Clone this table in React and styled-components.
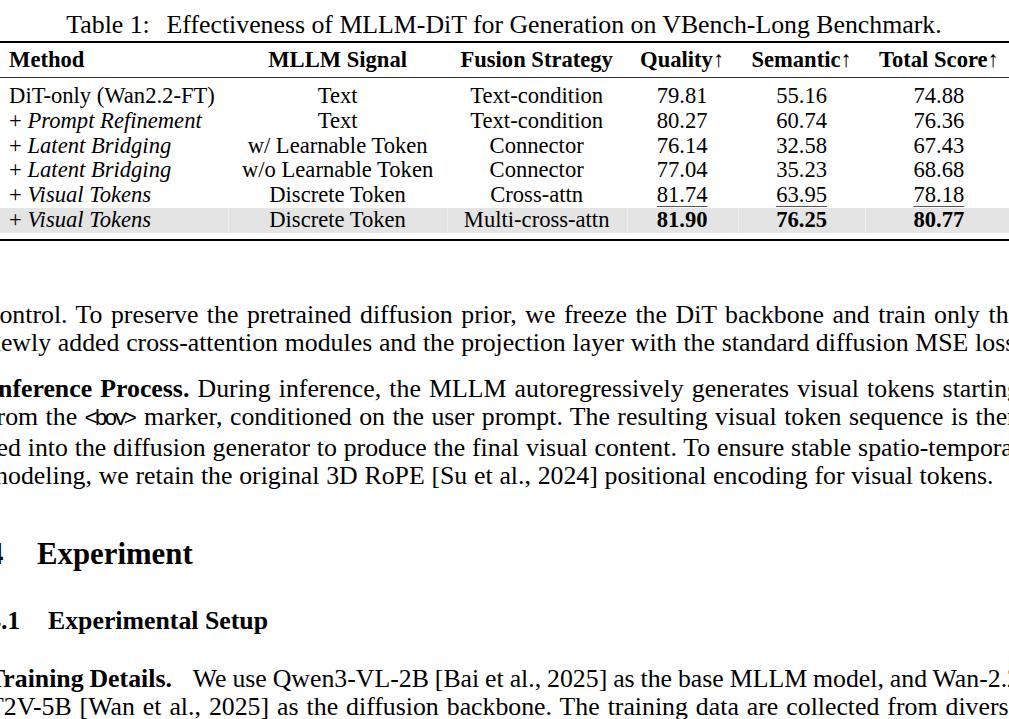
import React from 'react'
import styled, { createGlobalStyle } from 'styled-components'

const rows = [
  { method: 'DiT-only (Wan2.2-FT)', base: true, signal: 'Text', fusion: 'Text-condition', q: '79.81', s: '55.16', t: '74.88' },
  { method: 'Prompt Refinement', signal: 'Text', fusion: 'Text-condition', q: '80.27', s: '60.74', t: '76.36' },
  { method: 'Latent Bridging', signal: 'w/ Learnable Token', fusion: 'Connector', q: '76.14', s: '32.58', t: '67.43' },
  { method: 'Latent Bridging', signal: 'w/o Learnable Token', fusion: 'Connector', q: '77.04', s: '35.23', t: '68.68' },
  { method: 'Visual Tokens', signal: 'Discrete Token', fusion: 'Cross-attn', q: '81.74', s: '63.95', t: '78.18', mark: 'second' },
  { method: 'Visual Tokens', signal: 'Discrete Token', fusion: 'Multi-cross-attn', q: '81.90', s: '76.25', t: '80.77', mark: 'best', hl: true },
]

function Score({ value, mark }) {
  if (mark === 'best') return <b>{value}</b>
  if (mark === 'second') return <Under>{value}</Under>
  return value
}

function App() {
  return (
    <>
      <GlobalStyle />
      <Page>
        <Caption>
          <span className='label'>Table 1:</span> Effectiveness of MLLM-DiT for Generation on VBench-Long Benchmark.
        </Caption>

        <TableBox>
          <Table>
            <thead>
              <tr>
                <Head $left>Method</Head>
                <Head>MLLM Signal</Head>
                <Head>Fusion Strategy</Head>
                <Head>Quality<Arrow>↑</Arrow></Head>
                <Head>Semantic<Arrow>↑</Arrow></Head>
                <Head>Total Score<Arrow>↑</Arrow></Head>
              </tr>
            </thead>
            <tbody>
              {rows.map((r, i) => (
                <Row key={i} $first={i === 0} $hl={r.hl}>
                  <Cell $left>
                    {r.base ? r.method : <>+ <i>{r.method}</i></>}
                  </Cell>
                  <Cell>{r.signal}</Cell>
                  <Cell>{r.fusion}</Cell>
                  <Cell><Score value={r.q} mark={r.mark} /></Cell>
                  <Cell><Score value={r.s} mark={r.mark} /></Cell>
                  <Cell><Score value={r.t} mark={r.mark} /></Cell>
                </Row>
              ))}
            </tbody>
          </Table>
        </TableBox>

        <Para $gap={60}>
          <Line>control. To preserve the pretrained diffusion prior, we freeze the DiT backbone and train only the</Line>
          <Line $last>newly added cross-attention modules and the projection layer with the standard diffusion MSE loss.</Line>
        </Para>

        <Para $gap={18}>
          <Line><b>Inference Process.</b> During inference, the MLLM autoregressively generates visual tokens starting</Line>
          <Line>from the <Code>&lt;bov&gt;</Code> marker, conditioned on the user prompt. The resulting visual token sequence is then</Line>
          <Line>fed into the diffusion generator to produce the final visual content. To ensure stable spatio-temporal</Line>
          <Line $last>modeling, we retain the original 3D RoPE [Su et al., 2024] positional encoding for visual tokens.</Line>
        </Para>

        <Section>
          <Num $w={49}>4</Num>Experiment
        </Section>

        <Subsection>
          <Num $w={60}>4.1</Num>Experimental Setup
        </Subsection>

        <Para $gap={30}>
          <Line><b className='run-in'>Training Details.</b> We use Qwen3-VL-2B [Bai et al., 2025] as the base MLLM model, and Wan-2.2</Line>
          <Line>T2V-5B [Wan et al., 2025] as the diffusion backbone. The training data are collected from diverse</Line>
        </Para>
      </Page>
    </>
  )
}

const GlobalStyle = createGlobalStyle`
  html, body {
    margin: 0;
    padding: 0;
    background: #fff;
  }
  body {
    width: 1009px;
    height: 719px;
    overflow: hidden;
  }
`

const Page = styled.main`
  width: 1032px;
  margin-left: -12px;
  padding-top: 11px;
  font-family: 'Liberation Serif', 'Times New Roman', serif;
  font-size: 25.8px;
  color: #000;
`

const Caption = styled.div`
  text-align: center;
  line-height: 28px;

  .label {
    margin-right: 0.4em;
  }
`

const TableBox = styled.div`
  width: fit-content;
  margin: 2px auto 0;
  border-top: 2px solid #000;
  border-bottom: 2px solid #000;
  padding-bottom: 6px;
`

const Table = styled.table`
  border-collapse: collapse;
  font-size: 22.6px;
`

const Head = styled.th`
  padding: 4.6px 13.6px;
  line-height: 24.8px;
  font-weight: bold;
  white-space: nowrap;
  text-align: ${(p) => (p.$left ? 'left' : 'center')};
  border-bottom: 1px solid #333;
`

const Arrow = styled.span`
  font-weight: normal;
`

const Row = styled.tr`
  td {
    padding-top: ${(p) => (p.$first ? '6px' : '0')};
    background: ${(p) => (p.$hl ? '#e4e4e4' : 'transparent')};
  }
  td + td {
    box-shadow: ${(p) => (p.$hl ? 'inset 1px 0 0 #eeeeee' : 'none')};
  }
`

const Cell = styled.td`
  padding: 0 13.6px;
  line-height: 24.8px;
  white-space: nowrap;
  text-align: ${(p) => (p.$left ? 'left' : 'center')};
`

const Under = styled.span`
  text-decoration: underline;
  text-decoration-thickness: 1px;
  text-underline-offset: 4px;
  text-decoration-color: #555;
`

const Para = styled.div`
  margin-top: ${(p) => p.$gap}px;
  line-height: 28px;

  .run-in {
    margin-right: 0.6em;
  }
`

const Line = styled.div`
  text-align: ${(p) => (p.$last ? 'left' : 'justify')};
  text-align-last: ${(p) => (p.$last ? 'left' : 'justify')};
  word-spacing: ${(p) => (p.$last ? '0.3px' : '-3px')};
  white-space: ${(p) => (p.$last ? 'nowrap' : 'normal')};
`

const Code = styled.code`
  font-family: 'Liberation Mono', 'Courier New', monospace;
  font-size: 22px;
  letter-spacing: -3.4px;
  margin-right: 3px;
`

const Section = styled.h2`
  margin: 47px 0 0;
  font-size: 30.8px;
  line-height: 34px;
  font-weight: bold;
`

const Subsection = styled.h3`
  margin: 36px 0 0;
  font-size: 25.8px;
  line-height: 28px;
  font-weight: bold;
`

const Num = styled.span`
  display: inline-block;
  width: ${(p) => p.$w}px;
`

export default App
